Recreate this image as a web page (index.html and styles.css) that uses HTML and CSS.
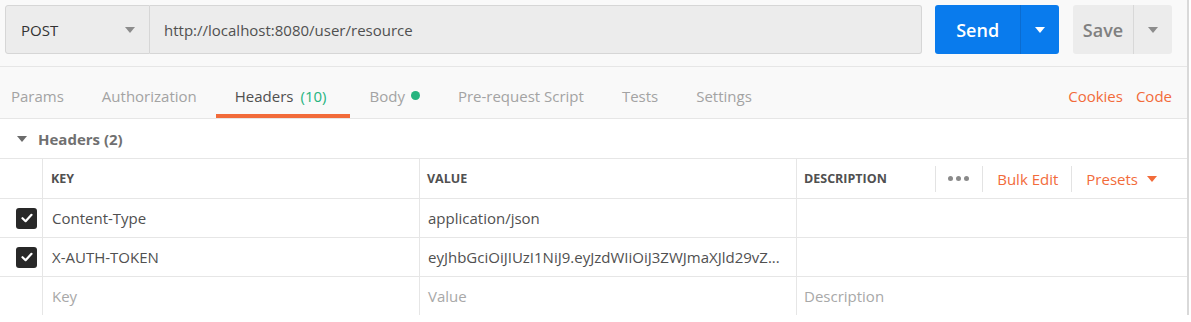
FILE: index.html
```html
<!DOCTYPE html>
<html lang="en">
<head>
  <meta charset="UTF-8" />
  <title>Request Headers</title>
  <link rel="stylesheet" href="styles.css">
</head>
<body>
  <div class="panel">
    <!-- URL bar -->
    <div class="request-bar">
      <div class="method">
        <span>POST</span>
        <span class="caret caret-gray"></span>
      </div>
      <div class="url">http://localhost:8080/user/resource</div>
      <div class="btn btn-send">
        <span class="btn-label">Send</span>
        <span class="btn-drop"><span class="caret caret-white"></span></span>
      </div>
      <div class="btn btn-save">
        <span class="btn-label">Save</span>
        <span class="btn-drop"><span class="caret caret-gray"></span></span>
      </div>
    </div>

    <!-- Tabs -->
    <div class="tabs">
      <div class="tab first">Params</div>
      <div class="tab">Authorization</div>
      <div class="tab active">Headers<span class="count">(10)</span></div>
      <div class="tab">Body<span class="dot"></span></div>
      <div class="tab">Pre-request Script</div>
      <div class="tab">Tests</div>
      <div class="tab">Settings</div>
      <div class="tab-links">
        <a>Cookies</a>
        <a>Code</a>
      </div>
    </div>

    <!-- Headers section -->
    <div class="section-title">
      <span class="caret caret-dark"></span>
      <span>Headers (2)</span>
    </div>

    <div class="table">
      <div class="row head">
        <div class="cell check"></div>
        <div class="cell key">Key</div>
        <div class="cell value">Value</div>
        <div class="cell desc">
          <span>Description</span>
          <div class="tools">
            <span class="tool dots"><i></i><i></i><i></i></span>
            <span class="tool link">Bulk Edit</span>
            <span class="tool link">Presets <span class="caret caret-orange"></span></span>
          </div>
        </div>
      </div>
      <div class="row">
        <div class="cell check"><span class="box"><svg width="12" height="10" viewBox="0 0 12 10"><path d="M1.5 5.2 L4.6 8.2 L10.5 1.8" fill="none" stroke="#fff" stroke-width="2.2" stroke-linecap="round" stroke-linejoin="round"/></svg></span></div>
        <div class="cell key">Content-Type</div>
        <div class="cell value">application/json</div>
        <div class="cell desc"></div>
      </div>
      <div class="row">
        <div class="cell check"><span class="box"><svg width="12" height="10" viewBox="0 0 12 10"><path d="M1.5 5.2 L4.6 8.2 L10.5 1.8" fill="none" stroke="#fff" stroke-width="2.2" stroke-linecap="round" stroke-linejoin="round"/></svg></span></div>
        <div class="cell key">X-AUTH-TOKEN</div>
        <div class="cell value">eyJhbGciOiJIUzI1NiJ9.eyJzdWIiOiJ3ZWJmaXJld29vZ...</div>
        <div class="cell desc"></div>
      </div>
      <div class="row">
        <div class="cell check"></div>
        <div class="cell key placeholder">Key</div>
        <div class="cell value placeholder">Value</div>
        <div class="cell desc placeholder">Description</div>
      </div>
    </div>
  </div>
</body>
</html>
```

FILE: styles.css
```css
* {
  box-sizing: border-box;
}
body {
  margin: 0;
  font-family: 'Open Sans', sans-serif;
  font-size: 15px;
  color: #505050;
  background: #fff;
}
.panel {
  width: 1189px;
  border-right: 2px solid #d9d9d9;
  height: 315px;
}

/* URL bar */
.request-bar {
  display: flex;
  height: 67px;
  padding: 5px 15px 0 5px;
  background: #f9f9f9;
  border-bottom: 1px solid #e6e6e6;
}
.method,
.url {
  height: 49px;
  display: flex;
  align-items: center;
  background: #ececec;
  border: 1px solid #d6d6d6;
  color: #505050;
}
.method {
  width: 145px;
  padding: 0 14px 0 15px;
  justify-content: space-between;
  border-radius: 3px 0 0 3px;
  color: #333;
}
.url {
  flex: 1;
  border-left: none;
  padding-left: 14px;
  border-radius: 0 3px 3px 0;
  margin-right: 13px;
}
.btn {
  height: 49px;
  display: flex;
  border-radius: 3px;
  font-size: 18px;
  font-weight: 600;
}
.btn-label {
  display: flex;
  align-items: center;
  justify-content: center;
}
.btn-drop {
  display: flex;
  align-items: center;
  justify-content: center;
  width: 38px;
}
.btn-send {
  width: 124px;
  background: #097bed;
  color: #fff;
  margin-right: 14px;
}
.btn-send .btn-label {
  width: 87px;
  border-right: 1px solid #0b6cd0;
}
.btn-save {
  width: 99px;
  background: #ececec;
  color: #808080;
}
.btn-save .btn-label {
  width: 61px;
  border-right: 1px solid #d8d8d8;
}

/* carets */
.caret {
  display: inline-block;
  width: 0;
  height: 0;
  border-left: 5px solid transparent;
  border-right: 5px solid transparent;
  border-top: 6px solid #888;
}
.caret-gray {
  border-top-color: #8c8c8c;
}
.caret-white {
  border-top-color: #fff;
}
.caret-dark {
  border-top-color: #6b6b6b;
}
.caret-orange {
  border-top-color: #f26b3a;
  margin-left: 9px;
  vertical-align: 2px;
}

/* tabs */
.tabs {
  display: flex;
  height: 52px;
  background: #f9f9f9;
  border-bottom: 1px solid #e6e6e6;
  padding-right: 15px;
}
.tab {
  display: flex;
  align-items: center;
  padding: 10px 19px 0;
  color: #a3a3a3;
  border-bottom: 4px solid transparent;
  white-space: pre;
}
.tab.first {
  padding-left: 11px;
}
.tab.active {
  color: #505050;
  border-bottom-color: #f26b3a;
}
.count {
  color: #26b47f;
  margin: 0 5px 0 7px;
}
.dot {
  display: inline-block;
  width: 9px;
  height: 9px;
  border-radius: 50%;
  background: #26b47f;
  margin-left: 6px;
}
.tab-links {
  margin-left: auto;
  display: flex;
  align-items: center;
  gap: 13px;
  padding-top: 6px;
}
.tab-links a {
  color: #f26b3a;
}

/* section */
.section-title {
  display: flex;
  align-items: center;
  height: 40px;
  padding-left: 17px;
  gap: 11px;
  font-weight: 700;
  color: #707070;
  border-bottom: 1px solid #e6e6e6;
}

/* table */
.row {
  display: flex;
  height: 39px;
  border-bottom: 1px solid #e6e6e6;
}
.row.head {
  height: 40px;
}
.cell {
  display: flex;
  align-items: center;
  border-left: 1px solid #e6e6e6;
  padding-left: 9px;
  white-space: nowrap;
}
.cell.check {
  width: 42px;
  border-left: none;
  padding-left: 16px;
}
.cell.key {
  width: 377px;
}
.cell.value {
  width: 377px;
  padding-left: 8px;
}
.cell.desc {
  flex: 1;
  padding-left: 7px;
}
.head .cell {
  font-size: 12.5px;
  font-weight: 700;
  text-transform: uppercase;
  color: #505050;
}
.head .cell.key {
  padding-left: 8px;
}
.head .cell.value {
  padding-left: 7px;
}
.tools {
  margin-left: auto;
  display: flex;
  align-items: center;
  height: 26px;
  padding-right: 17px;
}
.tool {
  display: flex;
  align-items: center;
  height: 26px;
  border-left: 1px solid #e3e3e3;
  padding: 0 13px 0 14px;
  font-size: 15px;
  font-weight: 400;
  text-transform: none;
}
.tool.dots {
  gap: 3px;
  padding: 0 13px 0 12px;
}
.tool.dots i {
  width: 5px;
  height: 5px;
  border-radius: 50%;
  background: #8a8a8a;
}
.tool.link {
  color: #f26b3a;
}
.box {
  display: flex;
  align-items: center;
  justify-content: center;
  width: 21px;
  height: 21px;
  border-radius: 3px;
  background: #282828;
}
.placeholder {
  color: #a8a8a8;
}
```
